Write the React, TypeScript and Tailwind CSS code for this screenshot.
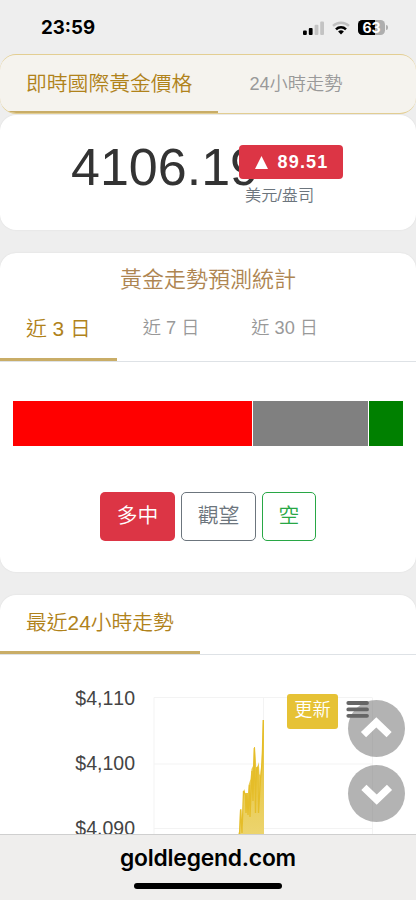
import { clsx } from 'clsx';

const axisLabels = ['$4,110', '$4,100', '$4,090'];

const forecast = [
  { name: 'bull', className: 'w-[239px] bg-[#ff0000]' },
  { name: 'neutral', className: 'w-[114.5px] bg-[#808080]' },
  { name: 'bear', className: 'w-[34px] bg-[#008000]' },
];

function StatusBar() {
  return (
    <header className="flex h-[54px] items-center justify-between pt-px pl-[41px] pr-[28px]">
      <span className="font-['Inter'] text-[18.7px] leading-6 font-bold text-black">23:59</span>
      <div className="flex items-center">
        <svg width="21" height="14" viewBox="0 0 21 14" className="mr-[8px]">
          <rect x="0" y="9.5" width="3.8" height="4.5" rx="1" />
          <rect x="5.8" y="7" width="3.8" height="7" rx="1" />
          <rect x="11.6" y="3.8" width="3.8" height="10.2" rx="1" fill="#c3c3c3" />
          <rect x="17.2" y="0.5" width="3.8" height="13.5" rx="1" fill="#c3c3c3" />
        </svg>
        <svg width="18" height="14" viewBox="0 0 18 14" className="mr-[8px]" fill="none">
          <path d="M1 4.9a11.5 11.5 0 0 1 16 0" stroke="#c0c0c0" strokeWidth="2.5" />
          <path d="M4 8.3a7.2 7.2 0 0 1 10 0" stroke="#000" strokeWidth="2.5" />
          <path d="M9 13.6 6.1 10.6a4.2 4.2 0 0 1 5.8 0z" fill="#000" />
        </svg>
        <div className="relative h-[15px] w-[27px] overflow-hidden rounded-[4.5px] bg-[#aeaeae]">
          <div className="h-full w-[17px] bg-black" />
          <span className="absolute inset-0 text-center font-['Inter'] text-[14px] leading-[15px] font-bold text-white">63</span>
        </div>
        <div className="ml-px h-[5px] w-[2px] rounded-r-full bg-[#aeaeae]" />
      </div>
    </header>
  );
}

function Tab({ label, active, className }: { label: string; active?: boolean; className?: string }) {
  return (
    <button
      className={clsx(
        'relative shrink-0 px-[26px] whitespace-nowrap',
        active ? 'text-[20.8px] text-[#b0821a]' : 'text-[18.2px] text-[#999]',
        className,
      )}
    >
      {label}
      {active && <span className="absolute bottom-0 left-0 h-[3px] w-full bg-[#c9ad67]" />}
    </button>
  );
}

function PriceCard() {
  return (
    <>
      <section className="flex h-[60px] overflow-hidden rounded-2xl border-y border-[#e3ce92] bg-[#f5f3ee]">
        <Tab active label="即時國際黃金價格" className="h-[59px] pb-[2px]" />
        <Tab label="24小時走勢" className="ml-[5px] h-[60px] pb-[1px]" />
      </section>
      <section className="mt-px flex h-[115px] rounded-2xl bg-white pl-[71px] shadow-[0_0_2px_rgba(0,0,0,0.08)]">
        <div className="mt-[22px] w-[168px] text-[52px] leading-[60px] text-[#333]">4106.19</div>
        <div className="relative mt-[30px]">
          <div className="flex h-[34px] w-[104px] items-center rounded-[4px] bg-[#dc3545] pl-[16px] text-white">
            <svg width="13" height="13" viewBox="0 0 13 13" fill="currentColor">
              <path d="M6.5 0 13 13H0z" />
            </svg>
            <span className="ml-[9.5px] text-[18px] leading-6 font-bold tracking-[1.2px]">89.51</span>
          </div>
          <div className="pt-[4px] pl-[6px] text-[16.2px] leading-6 text-[#6c757d]">美元/盎司</div>
        </div>
      </section>
    </>
  );
}

function ForecastCard() {
  return (
    <section className="mt-[23px] h-[319px] rounded-2xl bg-white shadow-[0_0_2px_rgba(0,0,0,0.08)]">
      <h2 className="pt-[10px] text-center text-[22px] leading-[33px] font-[350] text-[#ae8551]">黃金走勢預測統計</h2>
      <div className="flex h-[66px] border-b border-[#dee2e6]">
        <Tab active label="近 3 日" className="h-[65px]" />
        <Tab label="近 7 日" className="h-[65px]" />
        <Tab label="近 30 日" className="h-[65px]" />
      </div>
      <div className="mx-[13px] mt-[39px] flex h-[45px] justify-between">
        {forecast.map((item) => (
          <div key={item.name} className={item.className} />
        ))}
      </div>
      <div className="mt-[46px] flex justify-center gap-[6px] text-[20.8px]">
        <button className="h-[49px] w-[75px] rounded-[5px] bg-[#dc3545] pb-px text-white">多中</button>
        <button className="h-[49px] w-[75px] rounded-[5px] border border-[#6c757d] pb-px text-[#6c757d]">觀望</button>
        <button className="h-[49px] w-[54px] rounded-[5px] border border-[#28a745] pb-px text-[#28a745]">空</button>
      </div>
    </section>
  );
}

function TrendChart() {
  return (
    <svg width="240" height="140" viewBox="0 0 240 140" className="absolute top-[40px] left-[153px]">
      <defs>
        <linearGradient id="gold" x1="0" y1="0" x2="0" y2="1">
          <stop offset="0" stopColor="#e6bf2b" />
          <stop offset="1" stopColor="#ecd46e" />
        </linearGradient>
      </defs>
      <g stroke="#f3f3f3" strokeWidth="1">
        <path d="M1 2.5H219M1 69H219M1 133.5H219" />
        <path d="M1 2.5V140M110.5 2.5V140M219.5 2.5V140" />
      </g>
      <path
        d="M85 140 86.5 135 87 114H88.5L89 136 90 120 90.5 96 91.5 94 92.2 98H95L95.6 90 97.5 84 98.5 74 100 71 100.5 65 101 52H102L102.8 64 103.2 72H104L105 70 105.8 67 106.5 79 107.5 81 108.5 67 109.5 50 110 25H111V140Z"
        fill="url(#gold)"
      />
      <path
        d="M86.5 140 87.6 115 89 138 90.5 96 92.5 100 93 118 94 98 95 120 96.5 90 97 122 99 76 100 106 101.3 53 102.5 118 103.5 74 104.8 72 105.5 118 107.5 84 109 68 109.5 54 110.2 25"
        fill="none"
        stroke="#e5bd29"
        strokeWidth="1.3"
        strokeLinejoin="bevel"
      />
    </svg>
  );
}

function ScrollButton({ direction }: { direction: 'up' | 'down' }) {
  return (
    <button className="size-[57px] rounded-full bg-[#808080]/60">
      <svg width="57" height="57" viewBox="0 0 57 57" fill="none" className={clsx(direction === 'down' && 'rotate-180')}>
        <path d="M15.5 34.6 28.3 22.3 41.1 34.6" stroke="#fff" strokeWidth="7.4" strokeLinejoin="miter" strokeLinecap="butt" />
      </svg>
    </button>
  );
}

function TrendCard() {
  return (
    <section className="mt-[23px] h-[240px] rounded-t-2xl bg-white shadow-[0_0_2px_rgba(0,0,0,0.08)]">
      <div className="flex h-[60px] border-b border-[#dee2e6]">
        <Tab active label="最近24小時走勢" className="h-[59px] pb-[4px]" />
      </div>
      <div className="relative h-[180px]">
        <div className="flex w-[135px] flex-col gap-[41px] pt-[31px] text-right text-[19.5px] leading-6 text-[#444] [font-kerning:none]">
          {axisLabels.map((label) => (
            <span key={label}>{label}</span>
          ))}
        </div>
        <TrendChart />
        <button className="absolute top-[39px] left-[287px] h-[35px] w-[51px] rounded-[3px] bg-[#e6c235] pb-[2px] text-[18.2px] text-white">
          更新
        </button>
        <div className="absolute top-[45px] left-[347.5px] flex flex-col gap-[8px]">
          <ScrollButton direction="up" />
          <ScrollButton direction="down" />
        </div>
        {/* chart export menu */}
        <svg width="24" height="20" viewBox="0 0 24 20" className="absolute top-[45px] left-[346px]">
          <path d="M2.3 3H21M2.3 9.4H21M2.3 15.8H21" stroke="#666" strokeWidth="3.8" strokeLinecap="round" />
        </svg>
      </div>
    </section>
  );
}

export default function App() {
  return (
    <div className="flex h-[900px] w-[416px] flex-col overflow-hidden bg-[#eeeeee] font-['Liberation_Sans','Noto_Sans_CJK_TC',sans-serif] font-[350]">
      <StatusBar />
      <main className="h-[780px] shrink-0 overflow-hidden">
        <PriceCard />
        <ForecastCard />
        <TrendCard />
      </main>
      <footer className="flex h-[66px] shrink-0 flex-col items-center border-t border-[#cfcfcf] bg-[#efeeed]">
        <span className="mt-[8px] font-['Inter'] text-[22.8px] leading-[30px] font-semibold tracking-[-0.2px] text-black">
          goldlegend.com
        </span>
        <span className="mt-[10px] h-[6px] w-[148px] rounded-full bg-black" />
      </footer>
    </div>
  );
}
